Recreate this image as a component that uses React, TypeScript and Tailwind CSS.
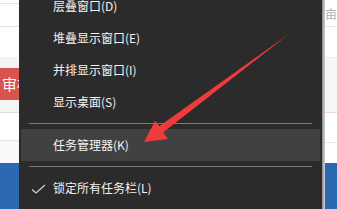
import React from "react";

const items = [
  { label: "层叠窗口(D)" },
  { label: "堆叠显示窗口(E)" },
  { label: "并排显示窗口(I)" },
  { label: "显示桌面(S)" },
];

function MenuItem({ label, active, checked }: { label: string; active?: boolean; checked?: boolean }) {
  return (
    <div className={`h-[32px] flex items-center mx-[2px] ${active ? "bg-[#414141]" : ""}`}>
      <div className="w-[32px] flex">
        {checked && (
          <svg width="15" height="10" viewBox="0 0 15 10" className="ml-[10px] mt-[1px]">
            <path d="M1 5.5 L5 9 L14 1" stroke="#d8d8d8" strokeWidth="1.1" fill="none" />
          </svg>
        )}
      </div>
      <span className="text-[12px] text-[#f2f2f2] leading-none">{label}</span>
    </div>
  );
}

function Separator() {
  return (
    <div className="h-[11px] flex items-center px-[10px]">
      <div className="h-px w-full bg-[#7b7b7b]" />
    </div>
  );
}

export default function App() {
  return (
    <div
      className="w-[337px] h-[209px] overflow-hidden flex relative bg-white"
      style={{ fontFamily: '"Microsoft YaHei", "Noto Sans CJK SC", "Noto Sans", sans-serif' }}
    >
      {/* page behind, left */}
      <div className="w-[19px] h-full flex flex-col shrink-0 bg-white">
        <div className="h-[3px]" />
        <div className="h-px bg-[#e3e3e3]" />
        <div className="h-[22px]" />
        <div className="h-px bg-[#e3e3e3]" />
        <div className="h-[30px]" />
        <div className="h-[55px] bg-[#f4f4f4] flex flex-col">
          <div className="h-[11px]" />
          <div className="h-[32px] bg-[#d9534f] flex items-center overflow-hidden">
            <span className="text-[15px] text-white whitespace-nowrap pl-[2px]">审核</span>
          </div>
        </div>
        <div className="h-px bg-[#e0dede]" />
        <div className="h-[27px]" />
        <div className="h-px bg-[#e3e3e3]" />
        <div className="h-[22px] bg-[#fafafa]" />
        <div className="flex-1 bg-[#2a68b1]" />
      </div>

      {/* context menu */}
      <div className="w-[303px] h-full bg-[#2b2b2b] shrink-0 flex flex-col">
        <div className="-mt-[10px]">
          {items.map((it) => (
            <MenuItem key={it.label} label={it.label} />
          ))}
          <Separator />
          <MenuItem label="任务管理器(K)" active />
          <Separator />
          <MenuItem label="锁定所有任务栏(L)" checked />
        </div>
      </div>

      {/* page behind, right */}
      <div className="flex-1 h-full flex">
        <div className="w-[3px] h-full bg-gradient-to-r from-[#8a8a8a] to-[#d6d6d6]" />
        <div className="flex-1 h-full flex flex-col bg-white">
          <div className="h-[26px] overflow-hidden">
            <span className="text-[12px] text-[#b0b0b0] whitespace-nowrap leading-[22px]">亩</span>
          </div>
          <div className="h-px bg-[#e6e6e6]" />
          <div className="h-[30px]" />
          <div className="h-px bg-[#ececec]" />
          <div className="h-[54px] bg-[#f7f7f7]" />
          <div className="h-px bg-[#f0d8d8]" />
          <div className="h-[29px]" />
          <div className="h-px bg-[#e6e6e6]" />
          <div className="h-[20px]" />
          <div className="flex-1 bg-[#2a68b1]" />
        </div>
      </div>

      {/* red annotation arrow */}
      <svg className="absolute left-0 top-0 pointer-events-none" width="337" height="209" viewBox="0 0 337 209">
        <polygon
          points="144,142 155,121 159.5,126 289,34 163,132.5 168,139"
          fill="#f03b3b"
        />
      </svg>
    </div>
  );
}
